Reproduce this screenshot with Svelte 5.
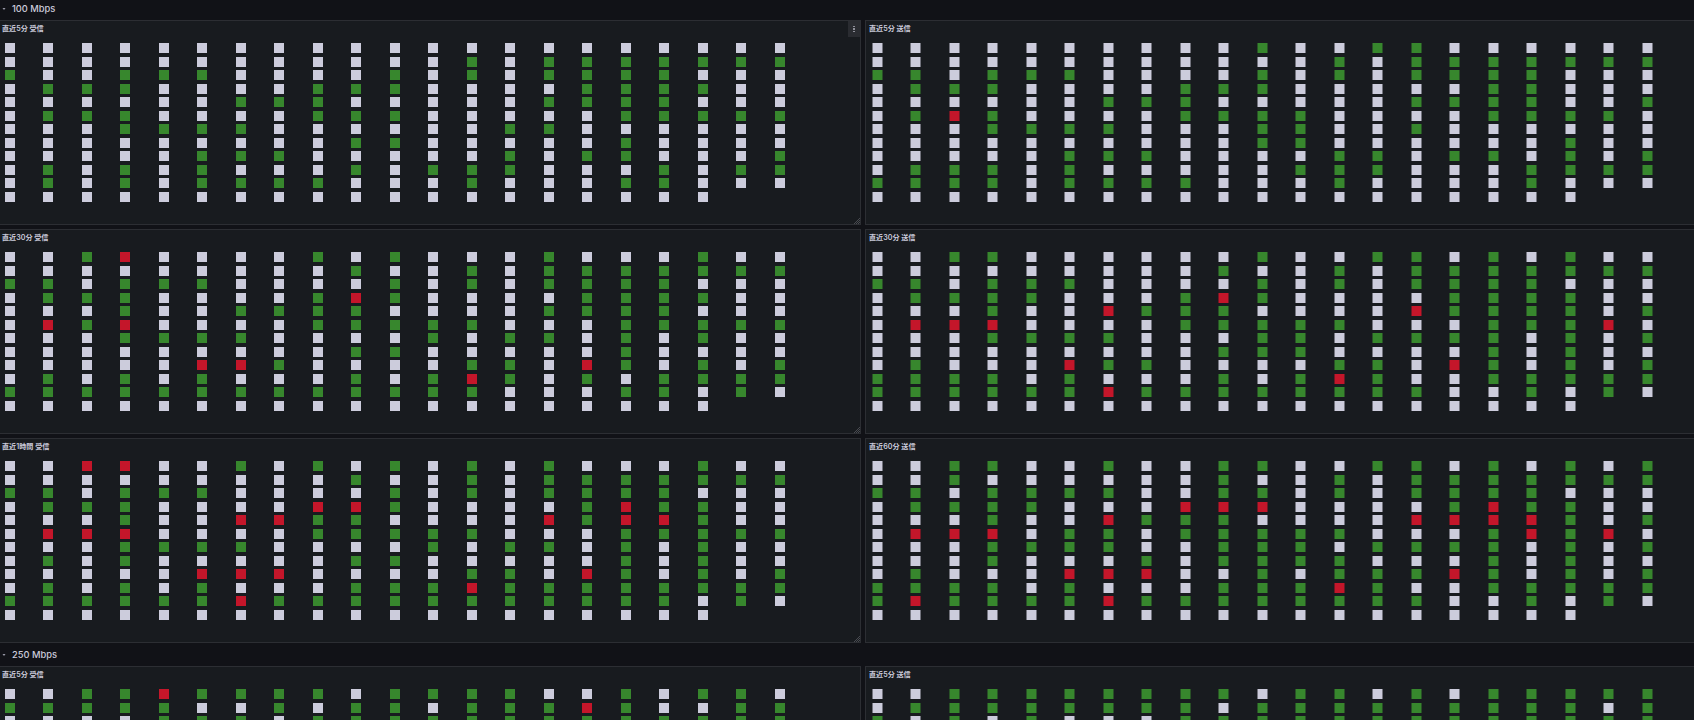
<script>
  // Each row lists the green columns (1-based); a negative number marks a red column.
  const e = [];
  const p1 = [e,[13,15,16,17,18,19,20,21],[1,4,5,6,11,13,15,16,17,18],[2,3,4,9,10,11,16,17,18,19],[7,8,9,15,16,17,18],[2,3,4,9,10,11,17,18,19,20,21],[4,5,6,7,14,15],[10,11,17],[6,7,8,14,16,17,21],[2,4,6,10,12,13,14,18,20,21],[2,4,6,7,8,9,13,17,18],e];
  const p2 = [[11,14,15],[13,15,16,17,18,19,20,21],[1,2,4,5,6,11,13,15,16,17,18],[2,3,4,9,10,11,17,18],[7,8,9,15,16,17,18,21],[2,-3,4,9,10,11,12,17,18,19,20],[4,5,6,7,11,12,15],[11,12,19],[6,7,8,13,14,16,17,19,21],[2,3,4,6,12,13,14,18,19,20,21],[1,2,3,4,6,7,8,9,13,18],e];
  const p3 = [[3,-4,9,11,15,19],[10,13,15,16,17,18,19,20,21],[1,2,4,5,6,11,13,15,16,17,18],[2,3,4,9,-10,11,16,17,18,19],[4,7,8,9,10,15,16,17,18],[-2,3,-4,9,10,11,12,13,17,18,19,20,21],[4,5,6,7,12,14,15,17,19],[10,11,17],[-6,-7,8,13,14,-16,17,19,21],[2,4,6,10,12,-13,14,16,18,19,20,21],[1,2,3,4,5,6,7,8,9,10,11,12,13,17,18,20],e];
  const p4 = [[3,4,11,14,15,17,19],[10,13,15,16,17,18,19,20,21],[1,2,4,5,6,11,13,15,16,17,18],[2,3,4,5,9,-10,11,16,17,18,19],[4,-7,8,9,10,-15,16,17,18,19,21],[-2,-3,-4,9,10,11,12,13,17,18,19,-20],[4,5,6,7,11,12,14,15,16,17,19,21],[10,11,12,17,19],[2,-6,7,8,13,14,-16,17,19,21],[1,2,3,4,6,10,12,-13,14,17,18,19,20,21],[1,2,3,4,5,6,-7,8,9,10,11,12,13,14,15,18,20],e];
  const p5 = [[-3,-4,7,9,11,13,15,19],[10,13,15,16,17,18,19,20,21],[1,2,4,5,6,11,13,15,16,17,18],[2,3,4,-9,-10,11,16,-17,18,19],[4,-7,-8,9,10,-15,16,-17,-18,19],[-2,-3,-4,9,10,11,12,13,17,18,19,20,21],[4,5,6,7,12,14,15,17,19],[2,4,10,11,17,19],[-6,-7,-8,13,14,-16,17,19,21],[2,4,6,10,11,12,-13,14,15,16,17,18,19,20,21],[1,2,3,4,5,6,-7,8,9,10,11,12,13,14,15,16,17,18,20],e];
  const p6 = [[3,4,7,10,11,14,15,17,19,21],[3,10,13,15,16,17,18,19,20,21],[1,2,4,5,6,7,10,11,13,15,16,17,18],[2,3,4,5,-9,-10,-11,16,-17,18,19],[4,-7,8,9,10,-15,-16,-17,-18,19,21],[-2,-3,-4,6,7,9,10,11,12,13,17,-18,19,-20],[4,5,6,7,10,11,12,14,15,16,17,19,21],[4,8,10,11,12,13,17,19],[2,-6,-7,-8,11,13,14,15,-16,17,19,21],[1,2,3,4,6,10,11,12,-13,14,17,18,19,20,21],[1,-2,3,4,5,6,-7,8,9,10,11,12,13,14,15,18,20],e];
  const p7 = [[3,4,-5,6,7,8,9,11,12,13,14,17,19,20],[1,2,3,4,5,8,10,11,13,14,15,-16,17,20,21],[5,6,7,9,10,11,12,13,14,15,16,17,18,19,20,21]];
  const p8 = [[3,4,5,6,7,8,9,10,12,13,15,17,18,19,20,21],[2,3,4,5,6,7,8,9,11,12,13,14,15,16,17,18,19,21],[1,3,5,9,10,11,12,13,14,15,16,17,18,19,20,21]];

  const sections = [
    { name: '100 Mbps', panels: [
      { title: '直近5分 受信', rows: p1, menu: true }, { title: '直近5分 送信', rows: p2 },
      { title: '直近30分 受信', rows: p3 }, { title: '直近30分 送信', rows: p4 },
      { title: '直近1時間 受信', rows: p5 }, { title: '直近60分 送信', rows: p6 }
    ]},
    { name: '250 Mbps', panels: [
      { title: '直近5分 受信', rows: p7 }, { title: '直近5分 送信', rows: p8 }
    ]}
  ];

  const cols = (rows, r) => (r === 11 ? 19 : 21);
  function tone(row, c) {
    if (row.includes(c)) return 'g';
    if (row.includes(-c)) return 'r';
    return 'w';
  }
</script>

<div class="viewport">
  <div class="page">
    {#each sections as s}
      <section>
        <header class="row-head">
          <svg class="chev" viewBox="0 0 6 4" aria-hidden="true"><path d="M1.5 1h3L3 3z" /></svg>
          <span>{s.name}</span>
        </header>
        <div class="panels">
          {#each s.panels as p, i}
            <article class="panel" class:second={i % 2 === 1}>
              <h2>{p.title}</h2>
              <div class="chart">
                {#each p.rows as row, r}
                  {#each Array(cols(p.rows, r)) as _, c}
                    <i class="cell {tone(row, c + 1)}"></i>
                  {/each}
                {/each}
              </div>
              {#if p.menu}
                <button class="menu" aria-label="menu"><b></b><b></b><b></b></button>
              {/if}
              {#if i % 2 === 0}
                <svg class="handle" viewBox="0 0 6 6" aria-hidden="true"><path d="M6 0L0 6M6 2L2 6M6 4L4 6" /></svg>
              {/if}
            </article>
          {/each}
        </div>
      </section>
    {/each}
  </div>
</div>

<style>
  :global(html), :global(body) { margin: 0; height: 100%; overflow: hidden; background: #111217; }

  .viewport { height: 720px; overflow: hidden; }
  .page {
    width: 1732px;
    margin: -3px 0 0 -2.5px;
    font-family: Inter, "Noto Sans CJK JP", sans-serif;
    color: #ccccdc;
  }

  .row-head {
    height: 23px;
    display: flex;
    align-items: center;
    gap: 5px;
    padding-left: 3.5px;
    font-size: 9.3px;
    font-weight: 500;
  }
  .chev { width: 6px; height: 4px; flex: none; }
  .chev path { fill: #9a9aa8; stroke: none; }

  .panels {
    display: grid;
    grid-template-columns: 863.5px 863.5px;
    grid-auto-rows: 205px;
    gap: 4px;
  }

  .panel {
    position: relative;
    box-sizing: border-box;
    background: #181b1f;
    border: 1px solid #2c2e33;
    padding: 3px 0 0 6.4px;
    overflow: hidden;
  }
  .panel.second { padding-left: 5.9px; }

  h2 {
    margin: 0 0 0 -2.9px;
    height: 10px;
    line-height: 10px;
    font-size: 7.1px;
    font-weight: 600;
    white-space: nowrap;
  }

  .chart {
    margin-top: 9px;
    display: grid;
    grid-template-columns: repeat(21, 10px);
    grid-auto-rows: 10px;
    column-gap: 28.5px;
    row-gap: 3.5px;
  }
  .second .chart {
    grid-template-columns: repeat(21, 11px);
    column-gap: 27.5px;
  }

  .cell { display: block; }
  .w { background: #ccccdc; }
  .g { background: #37872d; }
  .r { background: #c4162a; }

  .second .cell { border: solid transparent; border-width: 0 1px; background-clip: padding-box; }
  .second .w { border-color: rgba(204, 204, 220, 0.5); }
  .second .g { border-color: rgba(55, 135, 45, 0.5); }
  .second .r { border-color: rgba(196, 22, 42, 0.5); }

  .menu {
    position: absolute;
    top: 0;
    right: 0;
    width: 12px;
    height: 16px;
    padding: 0;
    border: 0;
    background: #2a2c31;
    display: flex;
    flex-direction: column;
    align-items: center;
    justify-content: center;
    gap: 1px;
  }
  .menu b { display: block; width: 1.5px; height: 1.5px; background: #8f909a; }

  .handle { position: absolute; right: 0; bottom: 0; width: 6px; height: 6px; }
  .handle path { fill: none; stroke: #55575d; stroke-width: 0.8; }
</style>
